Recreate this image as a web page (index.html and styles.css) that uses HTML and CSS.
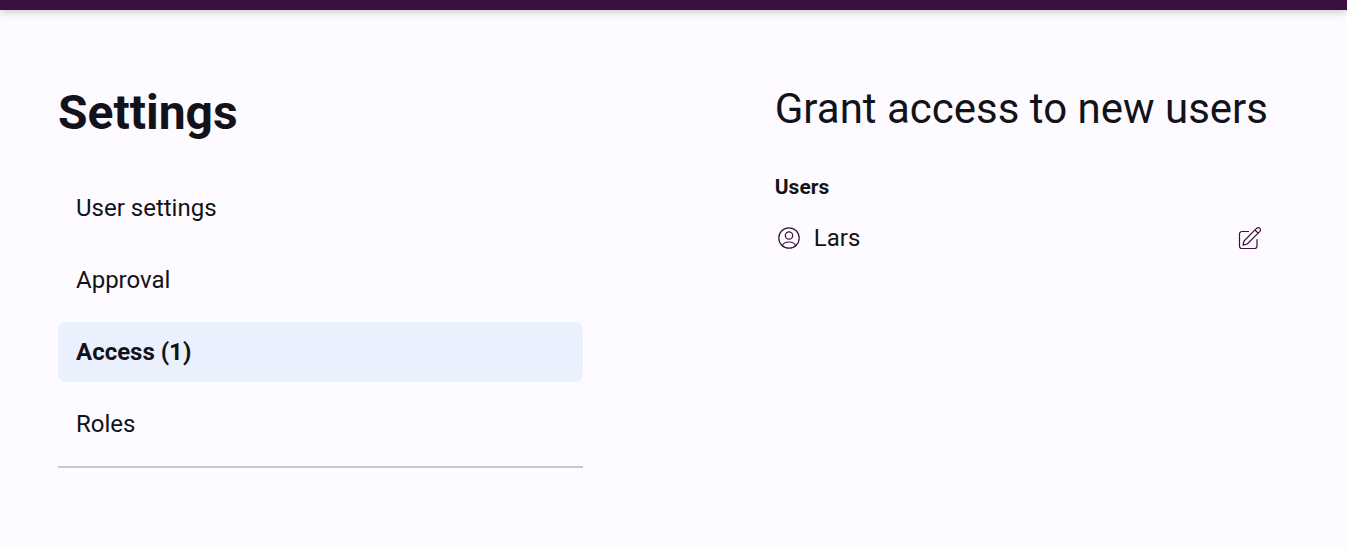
FILE: index.html
```html
<!DOCTYPE html>
<html lang="en">
<head>
<meta charset="utf-8">
<title>Settings</title>
<link rel="stylesheet" href="styles.css">
</head>
<body>
<header class="topbar"></header>
<main class="page">
  <aside class="sidebar">
    <h1 class="title">Settings</h1>
    <nav class="menu" aria-label="Settings">
      <a class="menu-item" href="#user">User settings</a>
      <a class="menu-item" href="#approval">Approval</a>
      <a class="menu-item active" href="#access" aria-current="page">Access (1)</a>
      <a class="menu-item" href="#roles">Roles</a>
    </nav>
  </aside>
  <section class="content">
    <h2 class="heading">Grant access to new users</h2>
    <h3 class="subheading">Users</h3>
    <ul class="users">
      <li class="user">
        <svg class="icon" viewBox="0 0 24 24" aria-hidden="true">
          <circle cx="12" cy="12" r="10.2"/>
          <circle cx="12" cy="9.5" r="3.7"/>
          <path d="M5.300 19.500C6.300 17.500 8.500 16 12 16s5.700 1.500 6.700 3.500"/>
        </svg>
        <span class="name">Lars</span>
        <button class="edit" type="button" aria-label="Edit Lars">
          <svg class="icon" viewBox="0 0 24 24" aria-hidden="true">
            <path d="M10.500 5.500H4a2.500 2.500 0 0 0-2.500 2.500v12A2.500 2.500 0 0 0 4 22.500h12.500A2.500 2.500 0 0 0 19 20v-6.500"/>
            <path d="M5 19.200l1-4.200L18.800 2.200a2.200 2.200 0 0 1 3.100 3.100L9.200 18zM17 4l3.200 3.200"/>
          </svg>
        </button>
      </li>
    </ul>
  </section>
</main>
</body>
</html>
```
FILE: styles.css
```css
* {
  box-sizing: border-box;
}

body {
  margin: 0;
  background: #fdfbff;
  color: #12131a;
  font-family: Roboto, sans-serif;
  font-size: 24px;
  line-height: 32px;
}

.topbar {
  height: 10px;
  background: #3c103e;
  box-shadow: 0 1px 10px rgba(0, 0, 0, 0.25);
}

.page {
  display: grid;
  grid-template-columns: 525fr 493fr;
  column-gap: 192px;
  align-items: start;
  padding: 73px 79px 80px 58px;
}

.title {
  margin: 0 0 35px;
  font-size: 48px;
  line-height: 60px;
  font-weight: 700;
}

.menu {
  display: flex;
  flex-direction: column;
  gap: 12px;
  padding-bottom: 12px;
  border-bottom: 2px solid #c8c8c8;
}

.menu-item {
  padding: 14px 18px;
  border-radius: 8px;
  color: inherit;
  text-decoration: none;
}

.menu-item.active {
  background: #ebf0ff;
  font-weight: 700;
}

.heading {
  margin: 0 0 36px;
  font-size: 42px;
  line-height: 52px;
  font-weight: 400;
  white-space: nowrap;
}

.subheading {
  margin: 0 0 19px;
  font-size: 21px;
  line-height: 32px;
  font-weight: 700;
}

.users {
  margin: 0;
  padding: 0;
  list-style: none;
}

.user {
  display: flex;
  align-items: center;
  gap: 13px;
  padding: 0 6px 0 2px;
}

.icon {
  display: block;
  width: 24px;
  height: 24px;
  fill: none;
  stroke: #3c103e;
  stroke-width: 1.2;
  stroke-linecap: round;
  stroke-linejoin: round;
}

.name {
  flex: 1;
}

.edit {
  padding: 0;
  border: 0;
  background: none;
  cursor: pointer;
}
```
